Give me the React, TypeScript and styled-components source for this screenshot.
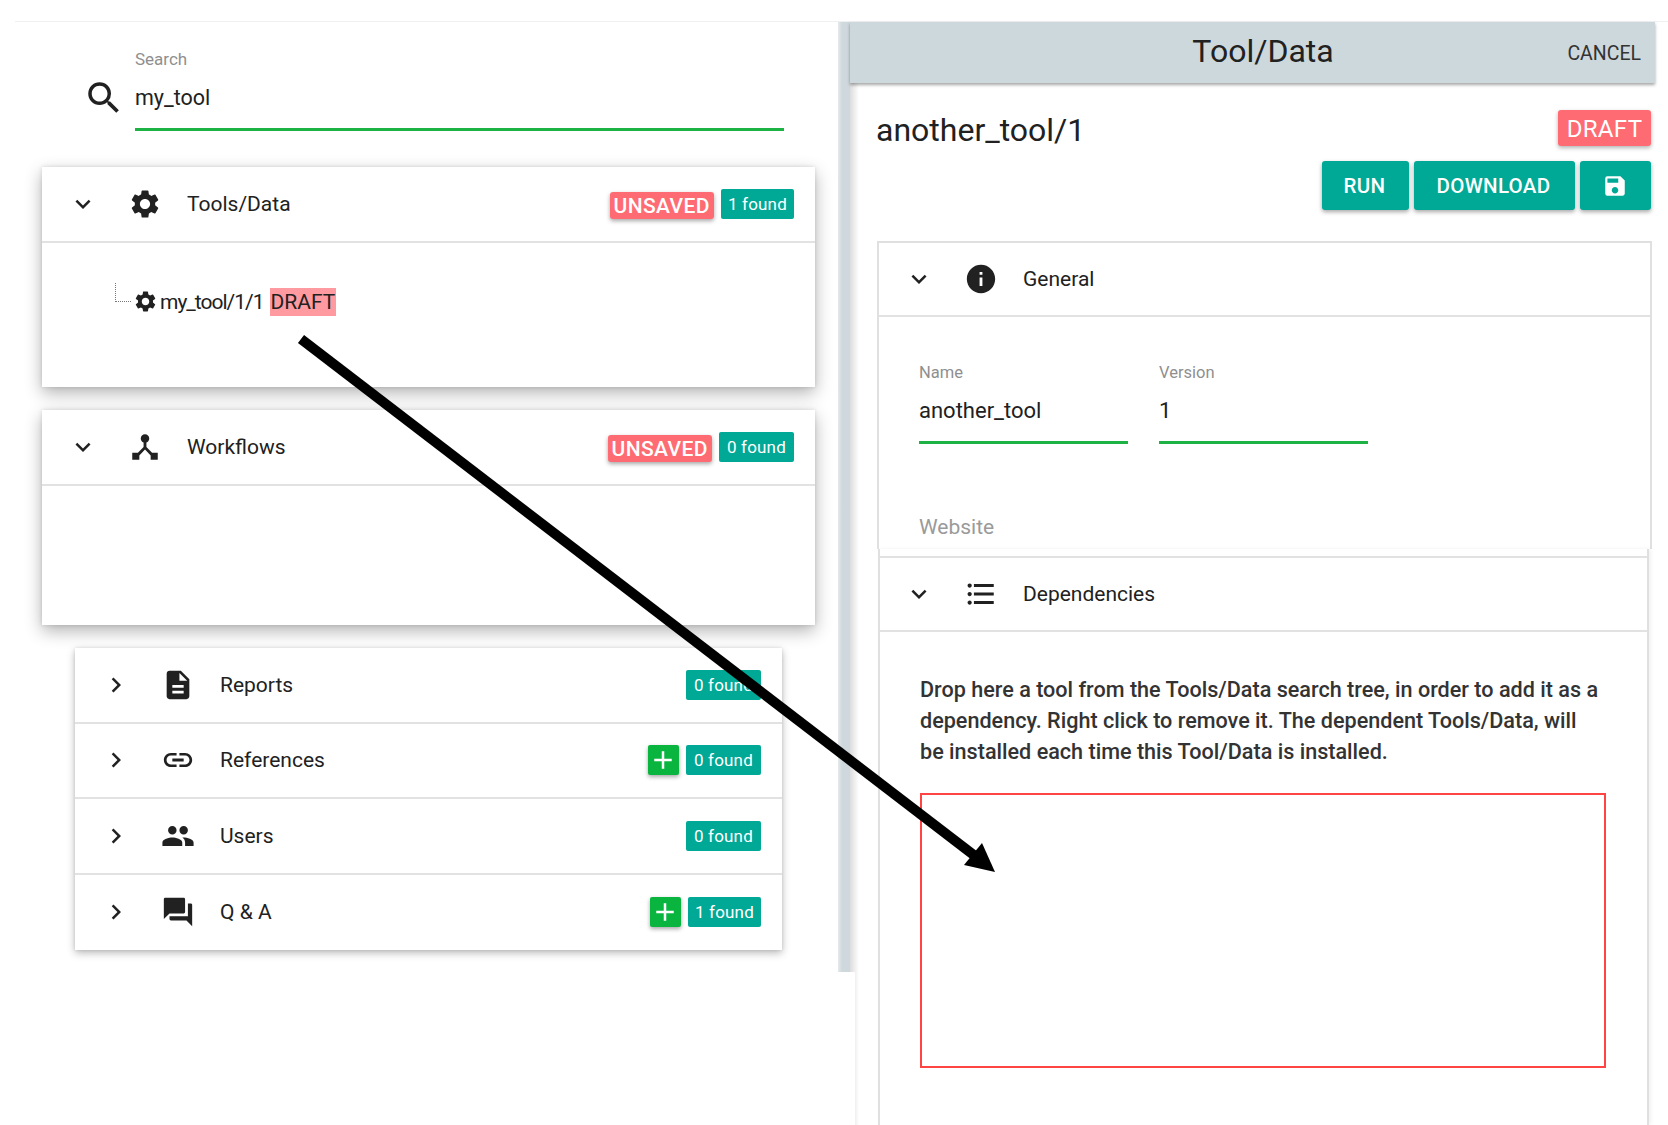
import React from "react"
import styled, { createGlobalStyle } from "styled-components"
import {
  MdAdd,
  MdChevronRight,
  MdDescription,
  MdDeviceHub,
  MdExpandMore,
  MdFormatListBulleted,
  MdInfo,
  MdLink,
  MdPeople,
  MdQuestionAnswer,
  MdSave,
  MdSearch,
  MdSettings,
} from "react-icons/md"

const GlobalStyle = createGlobalStyle`
  html, body {
    margin: 0;
    padding: 0;
    background: #fff;
    font-family: Roboto, "Liberation Sans", sans-serif;
    color: #212121;
  }
`

const Page = styled.div`
  position: relative;
  width: 1668px;
  height: 1125px;
  overflow: hidden;
  background: #fff;
`

const TopGap = styled.div`
  height: 22px;
  margin-left: 15px;
  box-sizing: border-box;
  border-bottom: 1px solid #f0f0f0;
`

const Columns = styled.div`
  display: flex;
  height: 1103px;
`

const LeftPane = styled.div`
  width: 838px;
  flex: none;
`

const Gutter = styled.div`
  width: 12px;
  height: 950px;
  flex: none;
  background: linear-gradient(90deg, #e4e9eb 0, #cfd8dc 35%);
`

const SearchRow = styled.div`
  display: flex;
  align-items: flex-start;
  height: 145px;
  padding-left: 83px;
  box-sizing: border-box;
`

const SearchIcon = styled(MdSearch)`
  width: 42px;
  height: 42px;
  margin: 55px 10px 0 0;
  color: #212121;
  flex: none;
`

const SearchField = styled.div`
  width: 649px;
  height: 109px;
  padding-top: 27px;
  box-sizing: border-box;
  border-bottom: 3px solid #1db344;
`

const SearchLabel = styled.div`
  font-size: 17px;
  line-height: 20px;
  color: #8f8f8f;
`

const SearchValue = styled.div`
  margin-top: 14px;
  font-size: 21.5px;
  line-height: 30px;
  color: #212121;
`

const Card = styled.section<{ $height: number }>`
  height: ${(p) => p.$height}px;
  width: 773px;
  margin: 0 0 23px 42px;
  background: #fff;
  box-shadow: 0 6px 16px rgba(0, 0, 0, 0.3), 0 0 4px rgba(0, 0, 0, 0.12);
`

const RowHead = styled.div<{ $inset: number; $height?: number }>`
  display: flex;
  align-items: center;
  height: ${(p) => p.$height ?? 76}px;
  padding: 0 21px 0 ${(p) => p.$inset}px;
  box-sizing: border-box;
  border-bottom: 2px solid #e2e2e2;
  font-size: 21px;
  color: #212121;
`

const Toggle = styled.span`
  display: flex;
  width: 30px;
  flex: none;
  font-size: 30px;
  color: #212121;
`

const RowIcon = styled.span`
  display: flex;
  justify-content: center;
  width: 34px;
  margin-left: 30px;
  margin-right: 25px;
  flex: none;
  font-size: 34px;
  color: #212121;
`

const RowLabel = styled.span`
  flex: 1;
`

const Chips = styled.span`
  display: flex;
  align-items: flex-end;
  gap: 7px;
`

const Found = styled.span<{ $narrow?: boolean }>`
  display: inline-flex;
  align-items: center;
  justify-content: center;
  height: 30px;
  padding: 0 ${(p) => (p.$narrow ? 7 : 8)}px;
  border-radius: 2px;
  background: #00a896;
  color: #fff;
  font-size: 17px;
  letter-spacing: 0.2px;
`

const Unsaved = styled.span`
  display: inline-flex;
  align-items: center;
  height: 27px;
  padding: 0 4px;
  border-radius: 3px;
  background: #ff6b72;
  color: #fff;
  font-size: 21px;
  font-weight: 500;
  letter-spacing: 0.4px;
  box-shadow: 0 2px 4px rgba(0, 0, 0, 0.35);
`

const AddButton = styled.span`
  display: inline-flex;
  align-items: center;
  justify-content: center;
  width: 31px;
  height: 30px;
  border-radius: 2px;
  background: #0ab53f;
  color: #fff;
  font-size: 30px;
  box-shadow: 0 2px 4px rgba(0, 0, 0, 0.35);
`

const TreeBody = styled.div`
  display: flex;
  align-items: center;
  height: 43px;
  margin-top: 37px;
  padding-left: 73px;
  font-size: 21px;
`

const TreeElbow = styled.span`
  width: 15px;
  height: 18px;
  margin-top: -18px;
  margin-right: 2px;
  border-left: 1px dotted #777;
  border-bottom: 1px dotted #777;
`

const TreeGear = styled(MdSettings)`
  width: 25px;
  height: 25px;
  margin-right: 2px;
`

const TreeName = styled.span`
  letter-spacing: -1px;
`

const DraftMark = styled.span`
  margin-left: 6px;
  padding: 1px 1px 0;
  background: #ff9aa0;
  line-height: 27px;
`

const Accordion = styled.section`
  width: 707px;
  margin-left: 75px;
  background: #fff;
  box-shadow: 0 3px 8px rgba(0, 0, 0, 0.28), 0 0 3px rgba(0, 0, 0, 0.1);

  & > div:last-child {
    border-bottom: 0;
  }
`

const Drawer = styled.div`
  position: relative;
  width: 805px;
  flex: none;
  background: linear-gradient(90deg, #dcdcdc 0, #fff 9px);
`

const DrawerHeader = styled.header`
  position: relative;
  display: flex;
  align-items: center;
  justify-content: center;
  height: 61px;
  padding: 0 0 4px 21px;
  box-sizing: border-box;
  background: #cdd8dc;
  box-shadow: 0 2px 3px rgba(0, 0, 0, 0.35);
`

const DrawerTitle = styled.h2`
  margin: 0;
  font-size: 32px;
  font-weight: 400;
  color: #212121;
`

const Cancel = styled.span`
  position: absolute;
  right: 14px;
  top: 21px;
  font-size: 19.5px;
  line-height: 21px;
  color: #333;
`

const TitleRow = styled.div`
  display: flex;
  align-items: flex-start;
  justify-content: space-between;
  padding: 27px 4px 0 26px;
`

const ToolName = styled.div`
  font-size: 32px;
  line-height: 40px;
  color: #212121;
`

const DraftChip = styled.span`
  display: inline-flex;
  align-items: center;
  justify-content: center;
  width: 93px;
  height: 36px;
  padding-top: 2px;
  box-sizing: border-box;
  border-radius: 3px;
  background: #ff6b72;
  color: #fff;
  font-size: 24px;
  letter-spacing: 0.3px;
  box-shadow: 0 2px 4px rgba(0, 0, 0, 0.3);
`

const Actions = styled.div`
  display: flex;
  justify-content: flex-end;
  gap: 5px;
  margin-top: 11px;
  padding-right: 4px;
`

const ActionButton = styled.button<{ $width: number }>`
  display: inline-flex;
  align-items: center;
  justify-content: center;
  width: ${(p) => p.$width}px;
  height: 49px;
  padding: 0 2px 0 0;
  border: 0;
  border-radius: 3px;
  background: #00a896;
  color: #fff;
  font-family: inherit;
  font-size: 20.5px;
  font-weight: 500;
  letter-spacing: 0.3px;
  box-shadow: 0 2px 4px rgba(0, 0, 0, 0.35);
`

const Panel = styled.section`
  width: 775px;
  height: 308px;
  margin: 31px 0 0 27px;
  box-sizing: border-box;
  background: #fff;
  border: solid #e0e0e0;
  border-width: 2px 2px 0;
`

const Fields = styled.div`
  display: flex;
  gap: 31px;
  padding: 46px 0 0 40px;
`

const Field = styled.div`
  width: 209px;
  height: 81px;
  box-sizing: border-box;
  border-bottom: 3px solid #1db344;
`

const FieldLabel = styled.div`
  font-size: 16.5px;
  line-height: 20px;
  color: #8f8f8f;
`

const FieldValue = styled.div`
  margin-top: 14px;
  font-size: 22px;
  line-height: 28px;
  color: #212121;
`

const Placeholder = styled.div`
  margin: 69px 0 0 40px;
  font-size: 21px;
  line-height: 28px;
  color: #9a9a9a;
`

const DependencyPanel = styled.section`
  width: 771px;
  height: 576px;
  margin-left: 28px;
  padding-top: 7px;
  box-sizing: border-box;
  background: #fff;
  border: solid #e0e0e0;
  border-width: 0 2px;
  box-shadow: 2px 0 4px rgba(0, 0, 0, 0.06);
`

const PanelHead = styled.div`
  border-top: 2px solid #e2e2e2;
`

const HelpText = styled.p`
  width: 682px;
  margin: 42px 0 0 40px;
  font-size: 21.6px;
  font-weight: 500;
  line-height: 31px;
  color: #333;
`

const DropZone = styled.div`
  width: 686px;
  height: 275px;
  margin: 26px 0 0 40px;
  box-sizing: border-box;
  border: 2px solid #f44;
`

const DrawerPatch = styled.div`
  position: absolute;
  left: 0;
  top: 950px;
  bottom: 0;
  width: 5px;
  background: #fff;
`

const ArrowOverlay = styled.svg`
  position: absolute;
  left: 0;
  top: 0;
  width: 1668px;
  height: 1125px;
  pointer-events: none;
`

const Collapsed = ({
  icon,
  label,
  children,
}: {
  icon: React.ReactNode
  label: string
  children: React.ReactNode
}) => (
  <RowHead $inset={26} $height={75.5}>
    <Toggle>
      <MdChevronRight />
    </Toggle>
    <RowIcon>{icon}</RowIcon>
    <RowLabel>{label}</RowLabel>
    <Chips>{children}</Chips>
  </RowHead>
)

const App: React.FC = () => {
  return (
    <Page>
      <GlobalStyle />
      <TopGap />
      <Columns>
        <LeftPane>
          <SearchRow>
            <SearchIcon />
            <SearchField>
              <SearchLabel>Search</SearchLabel>
              <SearchValue>my_tool</SearchValue>
            </SearchField>
          </SearchRow>

          <Card $height={220}>
            <RowHead $inset={26}>
              <Toggle>
                <MdExpandMore />
              </Toggle>
              <RowIcon>
                <MdSettings />
              </RowIcon>
              <RowLabel>Tools/Data</RowLabel>
              <Chips>
                <Unsaved>UNSAVED</Unsaved>
                <Found $narrow>1 found</Found>
              </Chips>
            </RowHead>
            <TreeBody>
              <TreeElbow />
              <TreeGear />
              <TreeName>my_tool/1/1</TreeName>
              <DraftMark>DRAFT</DraftMark>
            </TreeBody>
          </Card>

          <Card $height={215}>
            <RowHead $inset={26}>
              <Toggle>
                <MdExpandMore />
              </Toggle>
              <RowIcon>
                <MdDeviceHub />
              </RowIcon>
              <RowLabel>Workflows</RowLabel>
              <Chips>
                <Unsaved>UNSAVED</Unsaved>
                <Found>0 found</Found>
              </Chips>
            </RowHead>
          </Card>

          <Accordion>
            <Collapsed icon={<MdDescription />} label="Reports">
              <Found>0 found</Found>
            </Collapsed>
            <Collapsed icon={<MdLink />} label="References">
              <AddButton>
                <MdAdd />
              </AddButton>
              <Found>0 found</Found>
            </Collapsed>
            <Collapsed icon={<MdPeople />} label="Users">
              <Found>0 found</Found>
            </Collapsed>
            <Collapsed icon={<MdQuestionAnswer />} label="Q & A">
              <AddButton>
                <MdAdd />
              </AddButton>
              <Found $narrow>1 found</Found>
            </Collapsed>
          </Accordion>
        </LeftPane>

        <Gutter />

        <Drawer>
          <DrawerHeader>
            <DrawerTitle>Tool/Data</DrawerTitle>
            <Cancel>CANCEL</Cancel>
          </DrawerHeader>

          <TitleRow>
            <ToolName>another_tool/1</ToolName>
            <DraftChip>DRAFT</DraftChip>
          </TitleRow>
          <Actions>
            <ActionButton $width={87}>RUN</ActionButton>
            <ActionButton $width={161}>DOWNLOAD</ActionButton>
            <ActionButton $width={71}>
              <MdSave size={26} />
            </ActionButton>
          </Actions>

          <Panel>
            <RowHead $inset={25} $height={74}>
              <Toggle>
                <MdExpandMore />
              </Toggle>
              <RowIcon>
                <MdInfo />
              </RowIcon>
              <RowLabel>General</RowLabel>
            </RowHead>
            <Fields>
              <Field>
                <FieldLabel>Name</FieldLabel>
                <FieldValue>another_tool</FieldValue>
              </Field>
              <Field>
                <FieldLabel>Version</FieldLabel>
                <FieldValue>1</FieldValue>
              </Field>
            </Fields>
            <Placeholder>Website</Placeholder>
          </Panel>

          <DependencyPanel>
            <PanelHead>
              <RowHead $inset={24} $height={74}>
                <Toggle>
                  <MdExpandMore />
                </Toggle>
                <RowIcon>
                  <MdFormatListBulleted />
                </RowIcon>
                <RowLabel>Dependencies</RowLabel>
              </RowHead>
            </PanelHead>
            <HelpText>
              Drop here a tool from the Tools/Data search tree, in order to add it as a dependency.
              Right click to remove it. The dependent Tools/Data, will be installed each time this
              Tool/Data is installed.
            </HelpText>
            <DropZone />
          </DependencyPanel>
          <DrawerPatch />
        </Drawer>
      </Columns>

      <ArrowOverlay viewBox="0 0 1668 1125">
        <line x1="301" y1="339" x2="975" y2="856" stroke="#000" strokeWidth="10" />
        <polygon points="995,872 964,865 982,843" fill="#000" />
      </ArrowOverlay>
    </Page>
  )
}

export default App
